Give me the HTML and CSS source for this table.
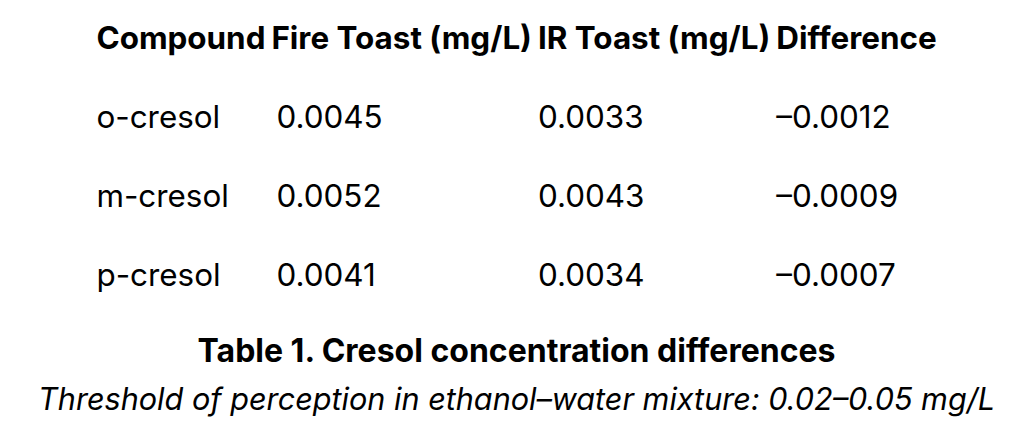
FILE: index.html
```html
<!DOCTYPE html>
<html lang="en">
<head>
    <meta charset="UTF-8">
    <meta name="viewport" content="width=device-width, initial-scale=1.0">
    <title>Cresol Table</title>
    <link rel="stylesheet" href="styles.css">
</head>
<body>
    <div class="container">
        <table class="data-table">
            <thead>
                <tr>
                    <th>Compound</th>
                    <th>Fire Toast (mg/L)</th>
                    <th>IR Toast (mg/L)</th>
                    <th>Difference</th>
                </tr>
            </thead>
            <tbody>
                <tr>
                    <td>o-cresol</td>
                    <td class="num">0.0045</td>
                    <td>0.0033</td>
                    <td>&ndash;0.0012</td>
                </tr>
                <tr>
                    <td>m-cresol</td>
                    <td class="num">0.0052</td>
                    <td>0.0043</td>
                    <td>&ndash;0.0009</td>
                </tr>
                <tr>
                    <td>p-cresol</td>
                    <td class="num">0.0041</td>
                    <td>0.0034</td>
                    <td>&ndash;0.0007</td>
                </tr>
            </tbody>
        </table>
        <div class="caption">Table 1. Cresol concentration differences</div>
        <div class="note">Threshold of perception in ethanol&ndash;water mixture: 0.02&ndash;0.05 mg/L</div>
    </div>
</body>
</html>
```

FILE: styles.css
```css
body {
    font-family: Inter, "Open Sans", sans-serif;
    margin: 0;
    padding: 0;
    background-color: #ffffff;
    color: #000000;
}
.container {
    padding-top: 19px;
    text-align: center;
}
.data-table {
    margin: 0 auto;
    border-collapse: collapse;
    font-size: 31.4px;
    line-height: 38px;
    text-align: left;
}
.data-table th {
    font-weight: 700;
    padding: 0 3px 20px;
}
.data-table td {
    font-weight: 400;
    padding: 20.5px 3px;
}
.data-table td.num {
    padding-left: 8px;
}
.caption {
    font-size: 32px;
    font-weight: 700;
    line-height: 38px;
    margin-top: 18px;
}
.note {
    font-size: 30.6px;
    font-style: italic;
    line-height: 38px;
    margin-top: 10px;
}
```
